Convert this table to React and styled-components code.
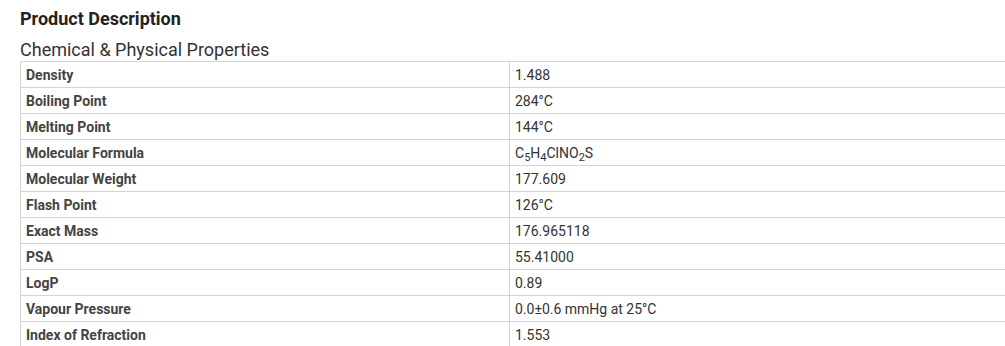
import React from "react";
import styled, { createGlobalStyle } from "styled-components";

const Global = createGlobalStyle`
  html, body { margin: 0; padding: 0; background: #fff; overflow: hidden; }
  body { font-family: Roboto, "Liberation Sans", Arial, sans-serif; }
`;

const Page = styled.div`
  padding: 8px 0 0 20px;
`;

const Title = styled.h2`
  margin: 0 0 9px;
  font-size: 18px;
  line-height: 22px;
  font-weight: 700;
  color: #222;
`;

const Subtitle = styled.h3`
  margin: 0;
  font-size: 18px;
  line-height: 22px;
  font-weight: 400;
  color: #333;
`;

const Table = styled.table`
  border-collapse: collapse;
  width: 1000px;
  table-layout: fixed;
  font-size: 14px;
`;

const Row = styled.tr``;

const Cell = styled.td`
  border: 1px solid #d4d4d4;
  height: 26px;
  padding: 0 5px;
  box-sizing: border-box;
  line-height: 16px;
  vertical-align: middle;
  width: ${(p) => (p.$label ? "489px" : "auto")};
  font-weight: ${(p) => (p.$label ? 700 : 400)};
  color: ${(p) => (p.$label ? "#444" : "#333")};
`;

const Sub = styled.sub`
  font-size: 11px;
  vertical-align: -3px;
  line-height: 0;
`;

const rows = [
  ["Density", "1.488"],
  ["Boiling Point", "284°C"],
  ["Melting Point", "144°C"],
  [
    "Molecular Formula",
    <>
      C<Sub>5</Sub>H<Sub>4</Sub>ClNO<Sub>2</Sub>S
    </>,
  ],
  ["Molecular Weight", "177.609"],
  ["Flash Point", "126°C"],
  ["Exact Mass", "176.965118"],
  ["PSA", "55.41000"],
  ["LogP", "0.89"],
  ["Vapour Pressure", "0.0±0.6 mmHg at 25°C"],
  ["Index of Refraction", "1.553"],
];

export default function App() {
  return (
    <Page>
      <Global />
      <Title>Product Description</Title>
      <Subtitle>Chemical &amp; Physical Properties</Subtitle>
      <Table>
        <tbody>
          {rows.map(([k, v]) => (
            <Row key={k}>
              <Cell $label>{k}</Cell>
              <Cell>{v}</Cell>
            </Row>
          ))}
        </tbody>
      </Table>
    </Page>
  );
}
